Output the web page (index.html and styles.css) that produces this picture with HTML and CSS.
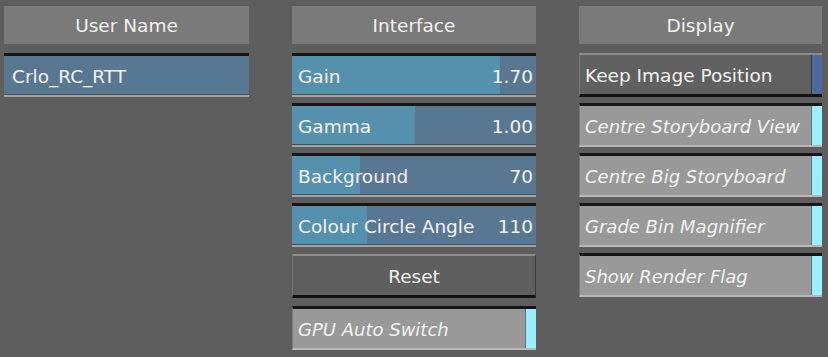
FILE: index.html
```html
<!DOCTYPE html>
<html lang="en">
<head>
  <meta charset="UTF-8">
  <title>preferences</title>
  <link rel="stylesheet" href="styles.css">
</head>
<body>
  <div class="panel">
    <div class="column">
      <div class="header">User Name</div>
      <div class="row field">Crlo_RC_RTT</div>
    </div>

    <div class="column">
      <div class="header">Interface</div>
      <div class="row slider" style="--fill: 208px"><span>Gain</span><span>1.70</span></div>
      <div class="row slider" style="--fill: 123px"><span>Gamma</span><span>1.00</span></div>
      <div class="row slider" style="--fill: 68px"><span>Background</span><span>70</span></div>
      <div class="row slider" style="--fill: 75px"><span>Colour Circle Angle</span><span>110</span></div>
      <div class="row button">Reset</div>
      <div class="row toggle"><span class="label">GPU Auto Switch</span><span class="lamp"></span></div>
    </div>

    <div class="column">
      <div class="header">Display</div>
      <div class="row toggle on"><span class="label">Keep Image Position</span><span class="lamp"></span></div>
      <div class="row toggle"><span class="label">Centre Storyboard View</span><span class="lamp"></span></div>
      <div class="row toggle"><span class="label">Centre Big Storyboard</span><span class="lamp"></span></div>
      <div class="row toggle"><span class="label">Grade Bin Magnifier</span><span class="lamp"></span></div>
      <div class="row toggle"><span class="label">Show Render Flag</span><span class="lamp"></span></div>
    </div>
  </div>
</body>
</html>
```

FILE: styles.css
```css
:root {
  --bg: #5e5e5e;
  --header: #7a7a7a;
  --field: #587892;
  --fill: 0px;
  --fill-on: #5590ad;
  --toggle: #999999;
  --lamp: #9beeff;
  --text: #f2f2f2;
}
html, body { margin: 0; background: var(--bg); }
body {
  width: 828px; height: 357px;
  font-family: 'DejaVu Sans', sans-serif;
  font-size: 18.5px;
  color: var(--text);
  overflow: hidden;
}
.panel {
  display: grid;
  grid-template-columns: 245px 244px 243px;
  column-gap: 43px;
  padding: 6px 0 0 4px;
}
.column { display: flex; flex-direction: column; gap: 6px; }
.header {
  height: 38px;
  background: var(--header);
  display: flex; align-items: center; justify-content: center;
  margin-bottom: 3px;
}
.row {
  height: 44px;
  box-sizing: border-box;
  display: flex; align-items: center;
  padding-top: 1px;
}
.field, .slider {
  border-top: 3px solid #161616;
  border-bottom: 2px solid #a3a3a3;
  box-shadow: inset 0 -1px 0 #3f5366;
  background: var(--field);
  padding-left: 8px;
}
.slider {
  justify-content: space-between;
  padding-left: 6px;
  padding-right: 3px;
  background: linear-gradient(to right, var(--fill-on) var(--fill), var(--field) var(--fill));
}
.button {
  justify-content: center;
  background: #5f5f5f;
  border-top: 2px solid #8c8c8c;
  border-left: 1px solid #787878;
  border-right: 1px solid #3a3a3a;
  border-bottom: 3px solid #121212;
  margin-top: 1px;
}
.toggle {
  background: var(--toggle);
  border-top: 3px solid #161616;
  border-bottom: 2px solid #b8b8b8;
  border-left: 1px solid #7a7a7a;
  align-items: stretch;
  padding-top: 0;
}
.toggle .label {
  flex: 1;
  display: flex; align-items: center;
  padding: 1px 0 0 5px;
  font-style: italic;
  font-size: 18px;
}
.toggle .lamp {
  width: 10px;
  background: var(--lamp);
  border-left: 1px solid #6e6e6e;
}
.column .toggle:last-child:nth-child(7) { margin-top: 2px; }
.toggle.on {
  background: #606060;
  border-top: 2px solid #8c8c8c;
  border-bottom: 3px solid #121212;
}
.toggle.on .label { font-style: normal; font-size: 18.5px; }
.toggle.on .lamp { background: #4b6a9a; border-left: 1px solid #3a3a3a; }
```
